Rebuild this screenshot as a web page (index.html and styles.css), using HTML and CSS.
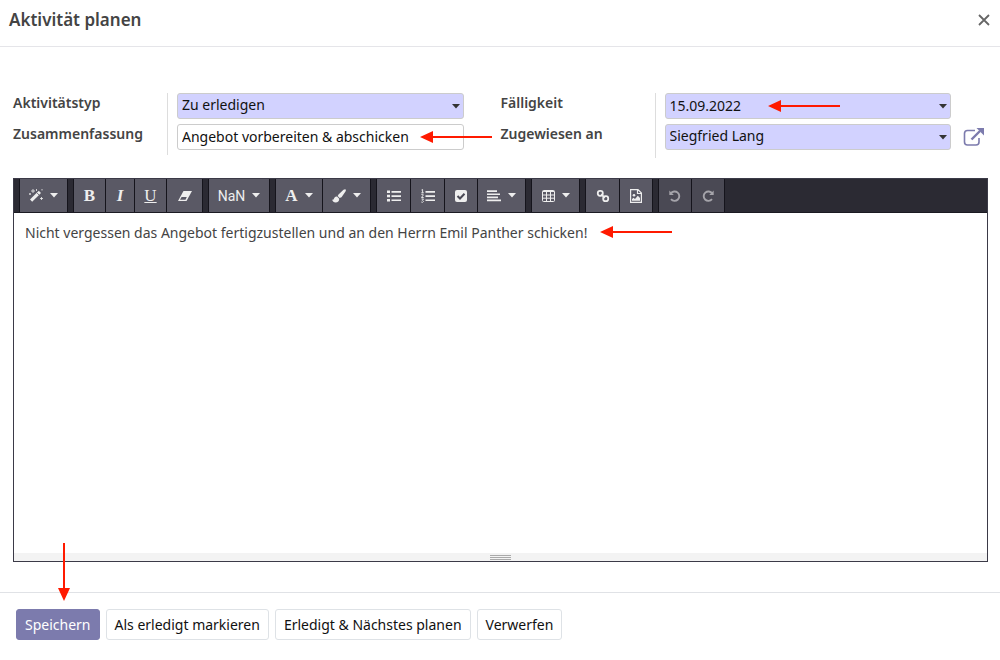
FILE: index.html
```html
<!DOCTYPE html>
<html lang="de">
<head>
<meta charset="utf-8">
<title>Aktivität planen</title>
<link rel="stylesheet" href="styles.css">
</head>
<body>
<svg class="defs" aria-hidden="true">
  <symbol id="caret" viewBox="0 0 8 5"><path d="M0 0h8L4 4.600z"/></symbol>
  <symbol id="arrow" viewBox="0 0 72 12"><path d="M0 6 13 0v5h59v2H13v5z"/></symbol>
</svg>
<main class="dialog">
  <header class="dialog-header">
    <h1 class="title">Aktivität planen</h1>
    <button class="close" type="button" aria-label="Schließen"><svg width="12" height="12" viewBox="0 0 12 12"><path d="M1 1 11 11M11 1 1 11" stroke="currentColor" stroke-width="1.800"/></svg></button>
  </header>

  <form class="form" id="activity">
    <div class="groups">
      <div class="group">
        <div class="labels"><label for="type">Aktivitätstyp</label><label for="summary">Zusammenfassung</label></div>
        <div class="fields">
          <div class="field"><select id="type" class="control required"><option>Zu erledigen</option></select><svg class="field-caret"><use href="#caret"/></svg></div>
          <div class="field"><input id="summary" class="control" type="text" value="Angebot vorbereiten &amp; abschicken"><svg class="arrow arrow-summary"><use href="#arrow"/></svg></div>
        </div>
      </div>
      <div class="group group-tall">
        <div class="labels"><label for="due">Fälligkeit</label><label for="user">Zugewiesen an</label></div>
        <div class="fields">
          <div class="field"><input id="due" class="control required" type="text" value="15.09.2022"><svg class="field-caret"><use href="#caret"/></svg><svg class="arrow arrow-due"><use href="#arrow"/></svg></div>
          <div class="field"><select id="user" class="control required"><option>Siegfried Lang</option></select><svg class="field-caret"><use href="#caret"/></svg>
            <button class="external" type="button" aria-label="Öffnen"><svg width="22" height="20" viewBox="0 0 22 20" fill="none" stroke="currentColor"><path d="M12 3.5H4.500Q1.500 3.500 1.500 6.500V15Q1.500 18 4.500 18H13Q16 18 16 15V11" stroke-width="1.600"/><path d="M8.500 12.500 17 4" stroke-width="2.400"/><path d="M13.500 1H21V8.500z" fill="currentColor" stroke="none"/></svg></button>
          </div>
        </div>
      </div>
    </div>

    <section class="editor">
      <div class="toolbar" role="toolbar">
        <div class="tools">
          <button class="tool menu" type="button" aria-label="Stil"><svg width="14" height="14" viewBox="0 0 14 14"><path d="M1 11.500 9.800 2.700 12 4.900 3.200 13.700z" transform="translate(0 -1)" fill="currentColor"/><path d="M8.300 4.200 10 5.900" stroke="#5a5965"/><path d="M4 0v4M2 2h4M7.500 0v2M12.500 8v3M11 9.500h3M1 4v2M0 5h2M13 0v1.500" stroke="currentColor" stroke-width=".8"/></svg><svg class="caret"><use href="#caret"/></svg></button>
        </div>
        <div class="tools">
          <button class="tool bold" type="button">B</button>
          <button class="tool italic" type="button">I</button>
          <button class="tool underline" type="button">U</button>
          <button class="tool wide" type="button" aria-label="Formatierung entfernen"><svg width="16" height="12" viewBox="0 0 16 12"><path d="M6.500 1H15L9.500 11H1z" fill="currentColor"/><path d="M3 9.800 4.600 7H9.800L8.500 9.800z" fill="#5a5965"/></svg></button>
        </div>
        <div class="tools">
          <button class="tool size" type="button">NaN<svg class="caret"><use href="#caret"/></svg></button>
        </div>
        <div class="tools">
          <button class="tool menu letter" type="button">A<svg class="caret"><use href="#caret"/></svg></button>
          <button class="tool menu" type="button" aria-label="Hintergrundfarbe"><svg width="14" height="14" viewBox="0 0 14 14" fill="currentColor"><path d="M13.600.4Q14.200 1 13.500 2.500L9.500 8.200 7.700 9 5.700 7 6.500 5.400 11.500.8Q13-.2 13.600.4zM5.100 7.600 7.200 9.700Q7.200 13.500 3.500 13.500 1 13.500 0 10.500 1.500 11.200 2 9.500 2.800 7.200 5.100 7.600z"/></svg><svg class="caret"><use href="#caret"/></svg></button>
        </div>
        <div class="tools">
          <button class="tool list" type="button" aria-label="Aufzählung"><svg width="14" height="12" viewBox="0 0 14 12" fill="currentColor"><path d="M0 .5h3v2.500H0zM0 4.700h3v2.500H0zM0 9h3v2.500H0zM4.500 1H14v1.700H4.500zM4.500 5.200H14v1.700H4.500zM4.500 9.400H14v1.700H4.500z"/></svg></button>
          <button class="tool list" type="button" aria-label="Nummerierung"><svg width="14" height="14" viewBox="0 0 14 14" fill="currentColor"><path d="M4.500 2H14v1.700H4.500zM4.500 6.200H14v1.700H4.500zM4.500 10.400H14v1.700H4.500z"/><path d="M.5 1 1.600.5v3.300M.3 3.800h2.500M.4 5.500Q2.400 4.700 2.300 6L.5 8.500h2.200M.5 10h2L1.400 11.300Q3.600 12.500 1.500 13.300L.3 13" fill="none" stroke="currentColor" stroke-width=".9"/></svg></button>
          <button class="tool" type="button" aria-label="Checkliste"><svg width="12" height="12" viewBox="0 0 12 12"><rect width="12" height="12" rx="2" fill="currentColor"/><path d="M2.500 6 5 8.500 9.500 3.800" fill="none" stroke="#4a4955" stroke-width="2"/></svg></button>
          <button class="tool menu" type="button" aria-label="Ausrichtung"><svg width="14" height="12" viewBox="0 0 14 12" fill="currentColor"><path d="M0 .3h10V2H0zM0 3.400h13v1.700H0zM0 6.500h11v1.700H0zM0 9.600h14v1.700H0z"/></svg><svg class="caret"><use href="#caret"/></svg></button>
        </div>
        <div class="tools">
          <button class="tool menu" type="button" aria-label="Tabelle"><svg width="13" height="12" viewBox="0 0 13 12" fill="none" stroke="currentColor"><rect x=".5" y=".5" width="12" height="11" rx="1"/><path d="M1 1.500h11M1 5h11M1 8.200h11M4.500 2v9M8.500 2v9"/></svg><svg class="caret"><use href="#caret"/></svg></button>
        </div>
        <div class="tools">
          <button class="tool list" type="button" aria-label="Link"><svg width="14" height="14" viewBox="0 0 14 14" fill="none" stroke="currentColor" stroke-width="1.800"><rect x="1.800" y="1.800" width="5" height="5" rx="2.200"/><rect x="7.200" y="7.200" width="5" height="5" rx="2.200"/><path d="M5.200 5.200 8.800 8.800"/></svg></button>
          <button class="tool" type="button" aria-label="Bild"><svg width="12" height="14" viewBox="0 0 12 14"><path d="M.6.600H8L11.400 4V13.400H.6zM7.500.6V4.500H11.400" fill="none" stroke="currentColor" stroke-width="1.200"/><circle cx="4" cy="6.200" r="1.300" fill="currentColor"/><path d="M2 11.800V10L3.500 8.700 5 10 7.800 6.700 10 9V11.800z" fill="currentColor"/></svg></button>
        </div>
        <div class="tools">
          <button class="tool" type="button" disabled aria-label="Rückgängig"><svg width="12" height="12" viewBox="0 0 12 12"><path d="M1.800 3.400A4.700 4.700 0 1 1 2 9.200" fill="none" stroke="currentColor" stroke-width="1.900"/><path d="M.3.600V5h4.500z" fill="currentColor"/></svg></button>
          <button class="tool" type="button" disabled aria-label="Wiederholen"><svg width="12" height="12" viewBox="0 0 12 12"><path d="M10.200 3.400A4.700 4.700 0 1 0 10 9.200" fill="none" stroke="currentColor" stroke-width="1.900"/><path d="M11.700.6V5H7.200z" fill="currentColor"/></svg></button>
        </div>
      </div>
      <div class="note" contenteditable="true" role="textbox" aria-label="Notiz"><p class="note-line">Nicht vergessen das Angebot fertigzustellen und an den Herrn Emil Panther schicken!</p></div>
      <svg class="arrow arrow-note"><use href="#arrow"/></svg>
      <div class="resize"><span class="grip"></span></div>
    </section>
  </form>

  <footer class="dialog-footer">
    <button class="btn primary" type="submit" form="activity">Speichern</button>
    <button class="btn" type="button">Als erledigt markieren</button>
    <button class="btn" type="button">Erledigt &amp; Nächstes planen</button>
    <button class="btn" type="button">Verwerfen</button>
    <svg class="arrow-down" viewBox="0 0 12 58"><path d="M5 0h2v45h5L6 58 0 45h5z"/></svg>
  </footer>
</main>
</body>
</html>
```
FILE: styles.css
```css
* { box-sizing: border-box; }
body { margin: 0; background: #fff; color: #444; font: 14px/20px "Noto Sans", "Open Sans", sans-serif; }
button, input, select { font: inherit; margin: 0; }
svg { display: block; flex: none; }
.defs { position: absolute; width: 0; height: 0; }
.dialog { display: flex; flex-direction: column; min-height: 100vh; }

.dialog-header { display: flex; align-items: center; justify-content: space-between; height: 47px; padding: 0 10px 6px 9px; border-bottom: 1px solid #e5e5e9; }
.title { margin: 0; font-size: 17px; line-height: 24px; font-weight: 600; }
.close { display: flex; padding: 0; border: 0; background: none; color: #666; }

.form { flex: 1; display: flex; flex-direction: column; padding: 46px 12px 30px 13px; }
.groups { display: grid; grid-template-columns: 1fr 1fr; align-items: start; height: 85px; }
.group { display: grid; grid-template-columns: 155px 1fr; height: 62px; }
.group-tall { height: 65px; }
.labels { display: flex; flex-direction: column; gap: 11px; border-right: 1px solid #ddd; font-weight: 600; }
.fields { display: flex; flex-direction: column; gap: 5px; padding: 0 37px 0 9px; }
.field { position: relative; height: 26px; }
.control { display: block; width: 100%; height: 26px; padding: 0 4px 2px; border: 1px solid #ccc; border-radius: 3px; background: #fff; color: #111; appearance: none; }
.required { background: #d2d2ff; }
.field-caret { position: absolute; right: 4px; top: 11px; width: 8px; height: 5px; fill: #333; pointer-events: none; }
.external { position: absolute; left: calc(100% + 12px); top: 3px; padding: 0; border: 0; background: none; color: #7c7bad; }

.arrow { position: absolute; width: 72px; height: 12px; fill: #ff1a00; pointer-events: none; }
.arrow-summary { right: -28px; top: 7px; }
.arrow-due { left: 103px; top: 7px; }
.arrow-note { left: 586px; top: 47px; }

.editor { position: relative; flex: 1; display: flex; flex-direction: column; border: 1px solid #3b3a47; }
.toolbar { display: flex; gap: 5px; height: 34px; padding-left: 5px; background: #2b2a33; border-bottom: 1px solid #1b1a22; }
.tools { display: flex; gap: 1px; padding: 0 1px; background: #15141c; }
.tool { display: flex; align-items: center; justify-content: center; gap: 7px; width: 32px; padding: 0; border: 0; background: #5a5965; color: #eee; }
.tool.menu { width: 47px; }
.tool.letter { width: 46px; }
.tool.wide { width: 35px; }
.tool.list { width: 33px; }
.tool.size { width: 60px; font: 14px/20px Roboto, sans-serif; }
.tool:disabled { background: #4a4954; color: #a5a4aa; }
.caret { width: 8px; height: 5px; fill: currentColor; }
.bold, .italic, .underline, .letter { font-family: "Liberation Serif", serif; font-size: 17px; font-weight: 700; }
.tool.bold { width: 31px; }
.tool.italic { width: 28px; font-style: italic; }
.tool.underline { width: 31px; font-weight: 400; text-decoration: underline; }
.note { flex: 1; padding: 10px 11px; outline: 0; }
.note-line { margin: 0; }
.resize { display: flex; justify-content: center; align-items: center; height: 8px; background: #f3f3f3; }
.grip { width: 21px; height: 5px; border: solid #aaa; border-width: 1px 0; background: linear-gradient(#f3f3f3 1px, #aaa 1px, #aaa 2px, #f3f3f3 2px); }

.dialog-footer { position: relative; display: flex; gap: 6px; padding: 16px 16px 20px; border-top: 1px solid #e0e2e6; }
.btn { height: 31px; padding: 0 8px; border: 1px solid #dee2e6; border-radius: 3px; background: #fff; color: #111; white-space: nowrap; }
.primary { border-color: #7c7bad; background: #7c7bad; color: #fff; }
.arrow-down { position: absolute; left: 58px; top: -50px; width: 12px; height: 58px; fill: #ff1a00; pointer-events: none; }
```
